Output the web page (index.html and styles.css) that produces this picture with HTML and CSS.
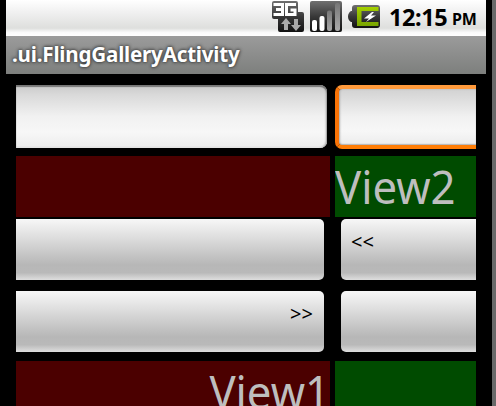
FILE: index.html
```html
<!DOCTYPE html>
<html lang="en">
<head>
<meta charset="utf-8">
<title>FlingGalleryActivity</title>
<link rel="stylesheet" href="styles.css">
</head>
<body>
<div class="device">
  <main class="screen">
    <header class="status">
      <svg class="icons" width="112" height="36" viewBox="268 0 112 36">
        <defs>
          <linearGradient id="dark" x1="0" y1="0" x2="0" y2="1"><stop offset="0" stop-color="#707070"/><stop offset=".5" stop-color="#383838"/><stop offset="1" stop-color="#111"/></linearGradient>
          <linearGradient id="bar" x1="0" y1="0" x2="0" y2="1"><stop offset="0" stop-color="#777"/><stop offset="1" stop-color="#aaa"/></linearGradient>
          <linearGradient id="lime" x1="0" y1="0" x2="0" y2="1"><stop offset="0" stop-color="#a4d000"/><stop offset="1" stop-color="#79a500"/></linearGradient>
        </defs>
        <path d="M274 1H296Q298 1 298 3V12H302Q304 12 304 14V30Q304 32 302 32H280Q278 32 278 30V19H274Q272 19 272 17V3Q272 1 274 1Z" fill="url(#dark)"/>
        <path d="M273.500 4.500H282.500V14.500H273.500M276 9.500H282M296 4.500H286.500V14.500H295V10H290.500" fill="none" stroke="#fff" stroke-width="3"/>
        <path d="M286 18L291 24H288V30H284V24H281ZM296 31L291 25H294V19H298V25H301Z" fill="#aaa"/>
        <rect x="310" y="1" width="32" height="31" rx="2" fill="url(#dark)"/>
        <rect x="312" y="20" width="5" height="11" rx="2" fill="#fff"/>
        <rect x="319.500" y="16" width="5" height="15" rx="2" fill="#fff"/>
        <rect x="327" y="10.500" width="5" height="20.500" rx="2" fill="url(#bar)"/>
        <rect x="335" y="3" width="5" height="28" rx="2" fill="url(#bar)"/>
        <path d="M355 5H377Q380 5 380 8V25Q380 28 377 28H355Q352 28 352 25V22H351Q348 20 348 16.500T351 11H352V8Q352 5 355 5Z" fill="url(#dark)"/>
        <path d="M357 7H378.500V11H361.500V22H378.500V26H357Z" fill="url(#lime)"/>
        <path d="M372 12L364 18.500H369L366 22L376 15.500H371L374 12Z" fill="#fff"/>
      </svg>
      <span class="time">12:15</span><span class="ampm">PM</span>
    </header>
    <h1 class="title"><span class="title-text">.ui.FlingGalleryActivity</span></h1>
    <div class="gallery">
      <section class="page first">
        <div class="field"></div>
        <div class="banner red"></div>
        <div class="button"></div>
        <div class="button next"><span>&gt;&gt;</span></div>
        <div class="banner red low"><span class="view">View1</span></div>
      </section>
      <section class="page second">
        <div class="field focused"></div>
        <div class="banner green"><span class="view">View2</span></div>
        <div class="button"><span>&lt;&lt;</span></div>
        <div class="button next"></div>
        <div class="banner green low"></div>
      </section>
    </div>
  </main>
</div>
</body>
</html>
```
FILE: styles.css
```css
* { box-sizing: border-box; }
body { margin: 0; background: #000; font-family: "Noto Sans", "Open Sans", sans-serif; }
.device { width: 496px; height: 406px; overflow: hidden; padding: 0 6px; border-right: 4px solid #696969; }
.screen { width: 480px; }
.status {
  height: 36px; display: flex; align-items: flex-start; padding-left: 262px;
  background: linear-gradient(#fff, #f0f0f0 35%, #dedfdd 78%, #fafafa 90%, #fff);
}
.icons { flex: none; }
.time, .ampm { font-weight: 700; color: #000; line-height: 35px; white-space: nowrap; }
.time { width: 63px; margin-left: 9px; font-size: 23.5px; letter-spacing: -0.4px; }
.ampm { font-size: 16px; letter-spacing: -0.2px; line-height: 39px; }
.title {
  margin: 0; height: 38px; padding-left: 6px; font-size: 21px; line-height: 37px; color: #fff;
  background: linear-gradient(#9b9b9b, #7d7f7d); text-shadow: 0 0 4px #333, 0 0 3px #444;
}
.title-text { display: inline-block; transform: scaleX(.98); transform-origin: left; letter-spacing: -0.2px; }
.gallery { display: flex; gap: 5px; padding: 11px 10px 0; }
.page { display: flex; flex-direction: column; }
.first { width: 314px; }
.second { width: 141px; }
.field {
  height: 63px; margin: 0 3px 8px 0; border-radius: 0 7px 7px 0;
  background: linear-gradient(#c9c9c9, #d9d9d9 15%, #f1f1f1 50%, #f7f7f7 75%, #ececec);
  box-shadow: inset 0 2px 1px #777, inset -1px 0 2px #999, inset 0 -1px 0 #fff;
}
.focused {
  height: 64px; margin: 0 0 7px; border: 4px solid #fc7b05; border-color: #ff9a3c #fc7b05 #ff7d05 #f97306;
  border-right: 0; border-radius: 7px 0 0 7px;
  background: linear-gradient(#d2d2d2, #f1f1f1 50%, #f7f7f7 75%, #ececec) padding-box;
  box-shadow: inset 1px 0 2px #aaa, inset 0 -1px 1px #bbb;
}
.banner { height: 61px; margin-bottom: 2px; overflow: hidden; }
.red { background: #4b0000; }
.green { background: #004b00; }
.view { display: block; font-size: 46px; line-height: 61px; color: #bebebe; white-space: nowrap; transform: scaleX(.95); transform-origin: left; }
.low { height: 45px; margin: 9px 0 0; }
.low .view { transform-origin: right; text-align: right; }
.button {
  height: 61px; font-size: 20px; color: #000; line-height: 46px; padding: 0 11px 0 10px;
  background: linear-gradient(#f7f7f7, #dedede 30%, #b7b7b7 75%, #b9b9b9 88%, #d2d2d2 96%, #ddd);
}
.first .button { margin-right: 6px; border-radius: 0 5px 5px 0; text-align: right; }
.second .button { margin-left: 6px; border-radius: 5px 0 0 5px; }
.next { margin-top: 11px; }
```
